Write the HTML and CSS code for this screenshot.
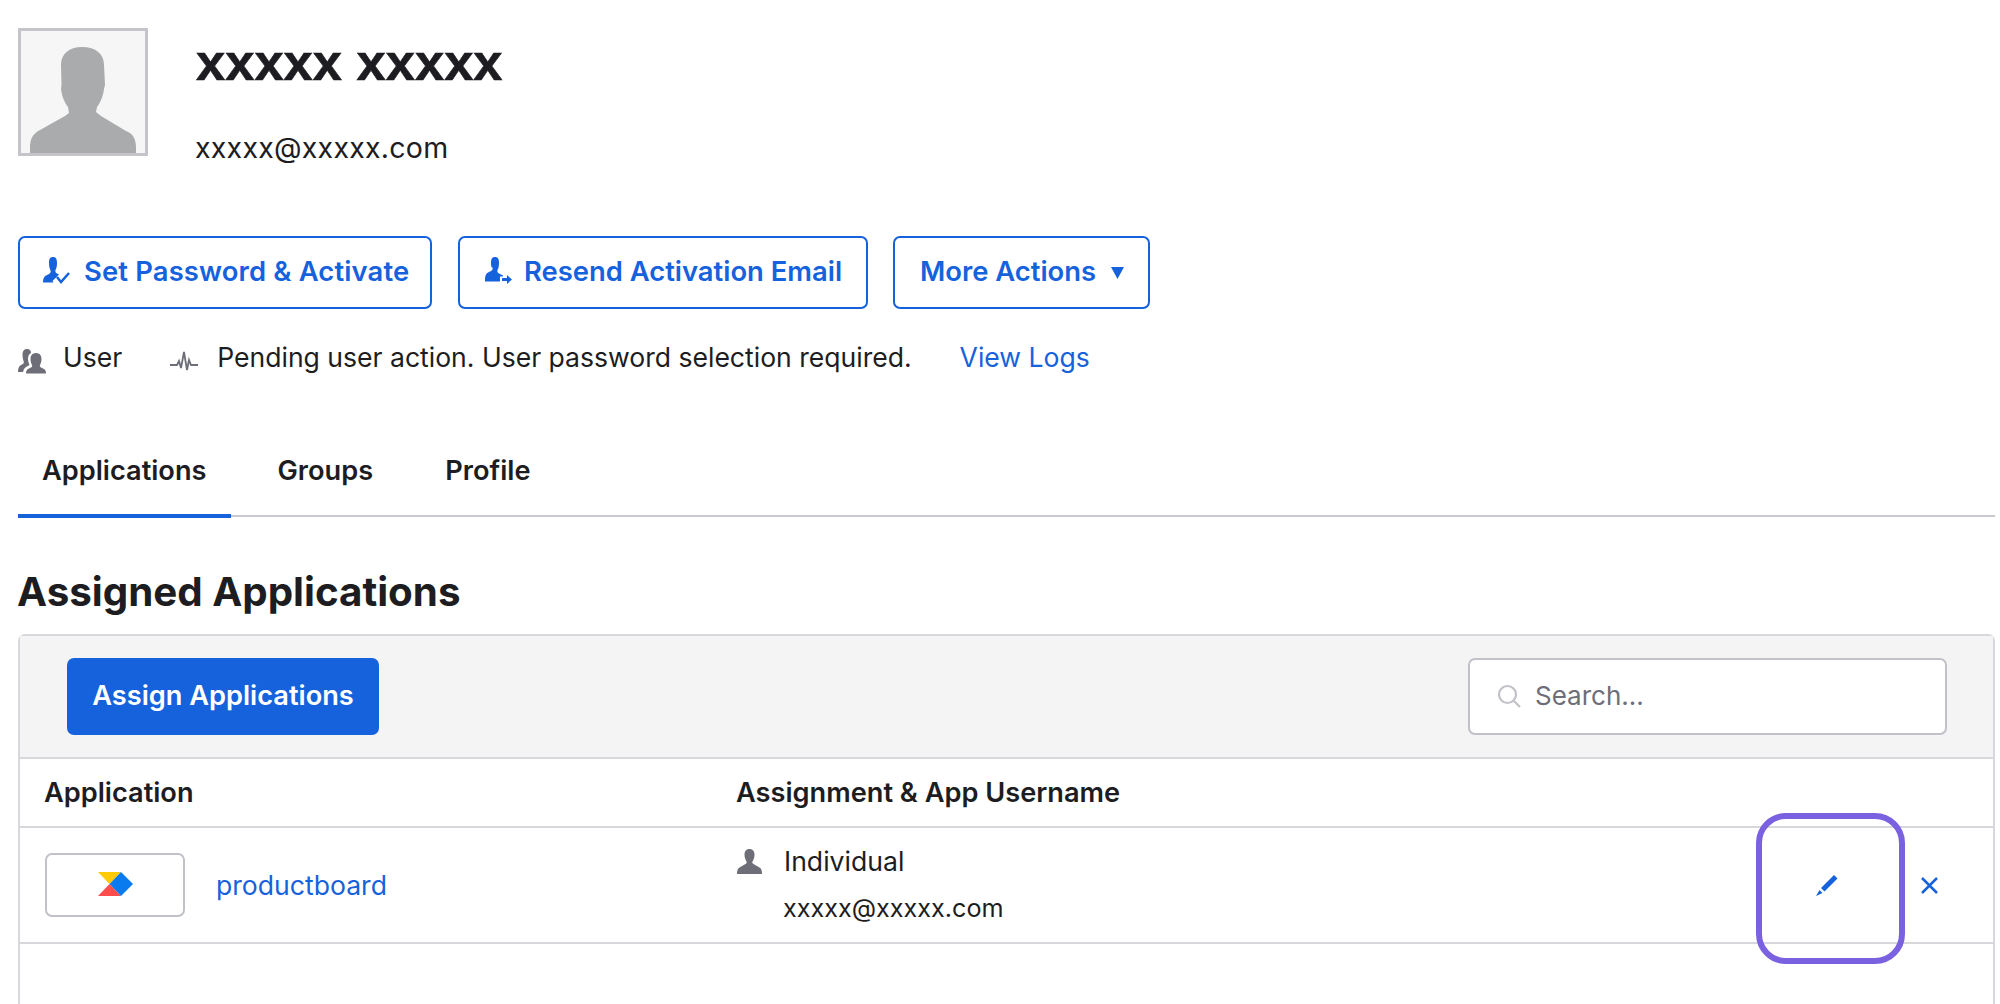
FILE: index.html
```html
<!DOCTYPE html>
<html lang="en">
<head>
<meta charset="utf-8">
<title>User</title>
<link rel="stylesheet" href="styles.css">
</head>
<body>
<main class="page">
  <header class="person">
    <div class="avatar">
      <svg class="avatar-svg" viewBox="0 0 124 122"><path d="M61 16c-13 0-21 7-21 18l.5 20-.5 4c1 8 4 14 7 18l1 6-4 3-25 14c-8 4-10 10-10 18v5h106v-5c0-8-2-14-10-17l-25-15-5-4 1-5c3-4 6-10 7-18l1-4-1-20c0-11-8-18-22-18z"/></svg>
    </div>
    <div class="identity">
      <h1 class="name">xxxxx xxxxx</h1>
      <div class="email">xxxxx@xxxxx.com</div>
    </div>
  </header>

  <div class="actions">
    <button class="btn btn-first">
      <svg class="btn-icon" viewBox="0 0 28 28"><path d="M11 0c3 0 4 2 4 6 0 3-.5 5-1.500 7-.5 1.500 0 2.500 1.500 3.500l2 1-5 5-1.500 1.500 1 1.500H1c0-4 1-6 3-7l3-1.500c1.500-1 2-2 1.500-3.500C7.500 11 7 9 7 6c0-4 1-6 4-6z"/><path class="stroke" d="M15 20l4 5 8-9"/></svg>
      Set Password &amp; Activate
    </button>
    <button class="btn btn-second">
      <svg class="btn-icon" viewBox="0 0 28 28"><path d="M11 0c3 0 4 2 4 6 0 3-.5 5-1.500 7-.5 1.500 0 2.500 1.500 3.500l4 2v1h-3v5H1c0-4 0-7 3-9l3-1.500c1.500-1 2-2 1.500-3.500C7.500 11 7 9 7 6c0-4 1-6 4-6z"/><path d="M18 21h5v-3l5 4.500-5 4.500v-3h-5z"/></svg>
      Resend Activation Email
    </button>
    <button class="btn btn-third">
      More Actions
      <svg class="caret" viewBox="0 0 12 12"><path d="M0 1h12L6 12z"/></svg>
    </button>
  </div>

  <div class="status">
    <svg class="status-users" viewBox="0 0 28 25"><path d="M9 0c3 0 4 2 4 4-2 1-3 3-3 6 0 2 .5 4 1.500 6L8 18l-2 2-1 3H0c0-4 1-6 3-7l2-1c1-1 1-2 .5-3C5 10 4.500 8 4.500 5 4.500 2 6 0 9 0z"/><path d="M18 4c4 0 5.500 3 5.500 6 0 3-1 5-1.500 6-.5 1 0 2 1 2.500l2 1c2 1 3 2 3 5H8c0-3 1-4 3-5l2-1c1-.5 1.500-1.500 1-2.500-.5-1-1.500-3-1.500-6 0-3 1.500-6 5.500-6z"/></svg>
    <span class="status-user">User</span>
    <svg class="status-pulse" viewBox="0 0 28 22"><path d="M0 15h7l2-4 2 7 3-16 3 18 2-10 2 5h7"/></svg>
    <span class="status-text">Pending user action. User password selection required.</span>
    <a class="link status-link">View Logs</a>
  </div>

  <nav class="tabs">
    <a class="tab tab-active">Applications</a>
    <a class="tab tab-groups">Groups</a>
    <a class="tab">Profile</a>
  </nav>

  <h2 class="section-title">Assigned Applications</h2>

  <section class="panel">
    <div class="toolbar">
      <button class="btn-primary">Assign Applications</button>
      <div class="search">
        <svg class="search-icon" viewBox="0 0 24 24"><circle cx="10.500" cy="10.500" r="8.500"/><path d="M17 17l6 6"/></svg>
        <span class="search-text">Search...</span>
      </div>
    </div>
    <div class="table-row table-head">
      <div class="col-app">Application</div>
      <div class="col-assign">Assignment &amp; App Username</div>
    </div>
    <div class="table-row table-item">
      <div class="col-app app-cell">
        <div class="logo-box">
          <svg class="logo" viewBox="0 0 35 26"><path fill="#ffcb05" d="M0 1h23L11.500 13z"/><path fill="#ff4d4d" d="M0 25l11.500-12L23 25z"/><path fill="#0a7bee" d="M11.500 13L23 1l12 12-12 12z"/></svg>
        </div>
        <a class="link app-name">productboard</a>
      </div>
      <div class="col-assign assign-cell">
        <div class="assign-type">
          <svg class="assign-icon" viewBox="0 0 25 25"><path d="M12.500 0c3.500 0 5 2.500 5 5.500 0 3-1 5.500-2 7-.5 1 0 2 1 2.500l6 3.500c2 1 2.500 3.500 2.500 6.500H0c0-3 .5-5.500 2.500-6.500L8.500 15c1-.5 1.500-1.500 1-2.500-1-1.500-2-4-2-7C7.500 2.500 9 0 12.500 0z"/></svg>
          <span>Individual</span>
        </div>
        <div class="assign-email">xxxxx@xxxxx.com</div>
      </div>
      <div class="row-actions">
        <svg class="edit-icon" viewBox="0 0 23 23"><path d="M5 15L18 2l3.500 3.500-13 13z"/><path d="M3.500 17l3 3L0 23z"/></svg>
        <svg class="remove-icon" viewBox="0 0 17 17"><path d="M1 1l15 15M16 1L1 16"/></svg>
      </div>
      <div class="focus-ring"></div>
    </div>
  </section>
</main>
</body>
</html>
```
FILE: styles.css
```css
* { box-sizing: border-box; }
html, body { margin: 0; height: 100%; overflow: hidden; background: #fff; }
body { font-family: Inter, "Liberation Sans", sans-serif; color: #1d1d21; font-size: 26.600px; }
.page { height: 1004px; padding: 28px 5px 0 18px; display: flex; flex-direction: column; }

.person { display: flex; height: 128px; }
.avatar { width: 130px; height: 128px; border: 3px solid #c4c4ca; background: #f6f6f6; display: flex; align-items: flex-end; }
.avatar-svg { width: 124px; height: 122px; fill: #a9abac; display: block; }
.identity { margin-left: 48px; }
.name { margin: 0; padding-top: 8px; font: 700 52.500px/52px "Liberation Sans", sans-serif; -webkit-text-stroke: .6px #1d1d21; }
.email { margin-top: 40px; margin-left: -1px; font-size: 28.500px; line-height: 40px; letter-spacing: .25px; }

.actions { display: flex; margin-top: 80px; }
.btn { height: 73px; border: 2.500px solid #1662dd; border-radius: 7px; background: #fff; color: #1662dd; font: 600 27.400px Inter, sans-serif; display: flex; align-items: center; padding: 0 0 4px; }
.btn-first { width: 414px; padding-left: 22px; letter-spacing: .15px; }
.btn-second { width: 410px; margin-left: 26px; padding-left: 24px; }
.btn-third { width: 257px; margin-left: 25px; padding-left: 25px; }
.btn-icon { width: 28px; height: 28px; fill: #1662dd; margin-right: 14px; flex: none; }
.btn-second .btn-icon { margin-right: 12px; }
.btn-icon .stroke { fill: none; stroke: #1662dd; stroke-width: 2.500; }
.caret { width: 13px; height: 13px; fill: #1662dd; margin-left: 15px; margin-top: 3px; }

.status { display: flex; align-items: center; height: 40px; margin-top: 28px; font-size: 26.550px; }
.status-users { width: 28px; height: 25px; fill: #6e6e78; margin-top: 8px; }
.status-user { margin-left: 17px; }
.status-pulse { width: 28px; height: 22px; margin-left: 48px; margin-top: 8px; fill: none; stroke: #6e6e78; stroke-width: 1.800; }
.status-text { margin-left: 19px; }
.status-link { margin-left: 48px; }
.link { color: #1662dd; }

.tabs { display: flex; height: 100px; margin-top: 40px; border-bottom: 2px solid #c9c9cf; }
.tab { height: 101px; padding: 34px 24px 0; font-size: 27.200px; font-weight: 600; line-height: 40px; margin-right: 23px; }
.tab-groups { margin-right: 24px; }
.tab-active { border-bottom: 4px solid #1662dd; }

.section-title { margin: 0 0 0 -1px; height: 117px; padding-top: 55px; font: 700 40.300px/40px Inter, sans-serif; }

.panel { flex: 1; border: 2.500px solid #d7d7dc; border-bottom: 0; border-radius: 7px 7px 0 0; }
.toolbar { height: 123px; background: #f4f4f4; border-bottom: 2.500px solid #d7d7dc; display: flex; align-items: center; justify-content: space-between; padding: 0 46px 0 47px; }
.btn-primary { width: 312px; height: 77px; padding: 0 0 2px; border: 0; border-radius: 7px; background: #1662dd; color: #fff; font: 600 27.200px Inter, sans-serif; }
.search { width: 479px; height: 77px; padding: 0 0 2px 27px; background: #fff; border: 2.500px solid #c1c1c8; border-radius: 7px; display: flex; align-items: center; }
.search-icon { width: 24px; height: 24px; fill: none; stroke: #c1c1c8; stroke-width: 2.200; }
.search-text { margin-left: 14px; color: #6e6e78; font-size: 26px; }

.table-row { display: flex; position: relative; }
.col-app { width: 716px; padding-left: 24px; flex: none; }
.table-head { height: 69px; align-items: center; font-size: 27.200px; font-weight: 600; border-bottom: 2.500px solid #d7d7dc; }
.table-item { height: 116px; border-bottom: 2.500px solid #d7d7dc; }
.app-cell { display: flex; align-items: center; }
.logo-box { width: 140px; height: 64px; margin-left: 1px; border: 2.500px solid #c1c1c8; border-radius: 7px; display: flex; align-items: center; justify-content: center; background: #fff; }
.logo { width: 35px; height: 26px; margin-left: 1px; margin-top: -2px; }
.app-name { margin-left: 31px; }
.assign-cell { padding-top: 13px; }
.assign-type { display: flex; align-items: center; height: 40px; }
.assign-icon { width: 25px; height: 25px; fill: #6e6e78; margin-right: 22px; margin-left: 1px; }
.assign-email { margin-left: 47px; margin-top: 7px; line-height: 40px; font-size: 25.200px; }
.row-actions { position: absolute; top: 0; bottom: 0; right: 0; width: 180px; }
.edit-icon { position: absolute; left: 3px; top: 45px; width: 23px; height: 23px; fill: #1662dd; }
.remove-icon { position: absolute; left: 108px; top: 49px; width: 17px; height: 17px; fill: none; stroke: #1662dd; stroke-width: 2.500; }
.focus-ring { position: absolute; left: 1736px; top: -15px; width: 149px; height: 151px; border: 6px solid #7a61e0; border-radius: 30px; }
```
